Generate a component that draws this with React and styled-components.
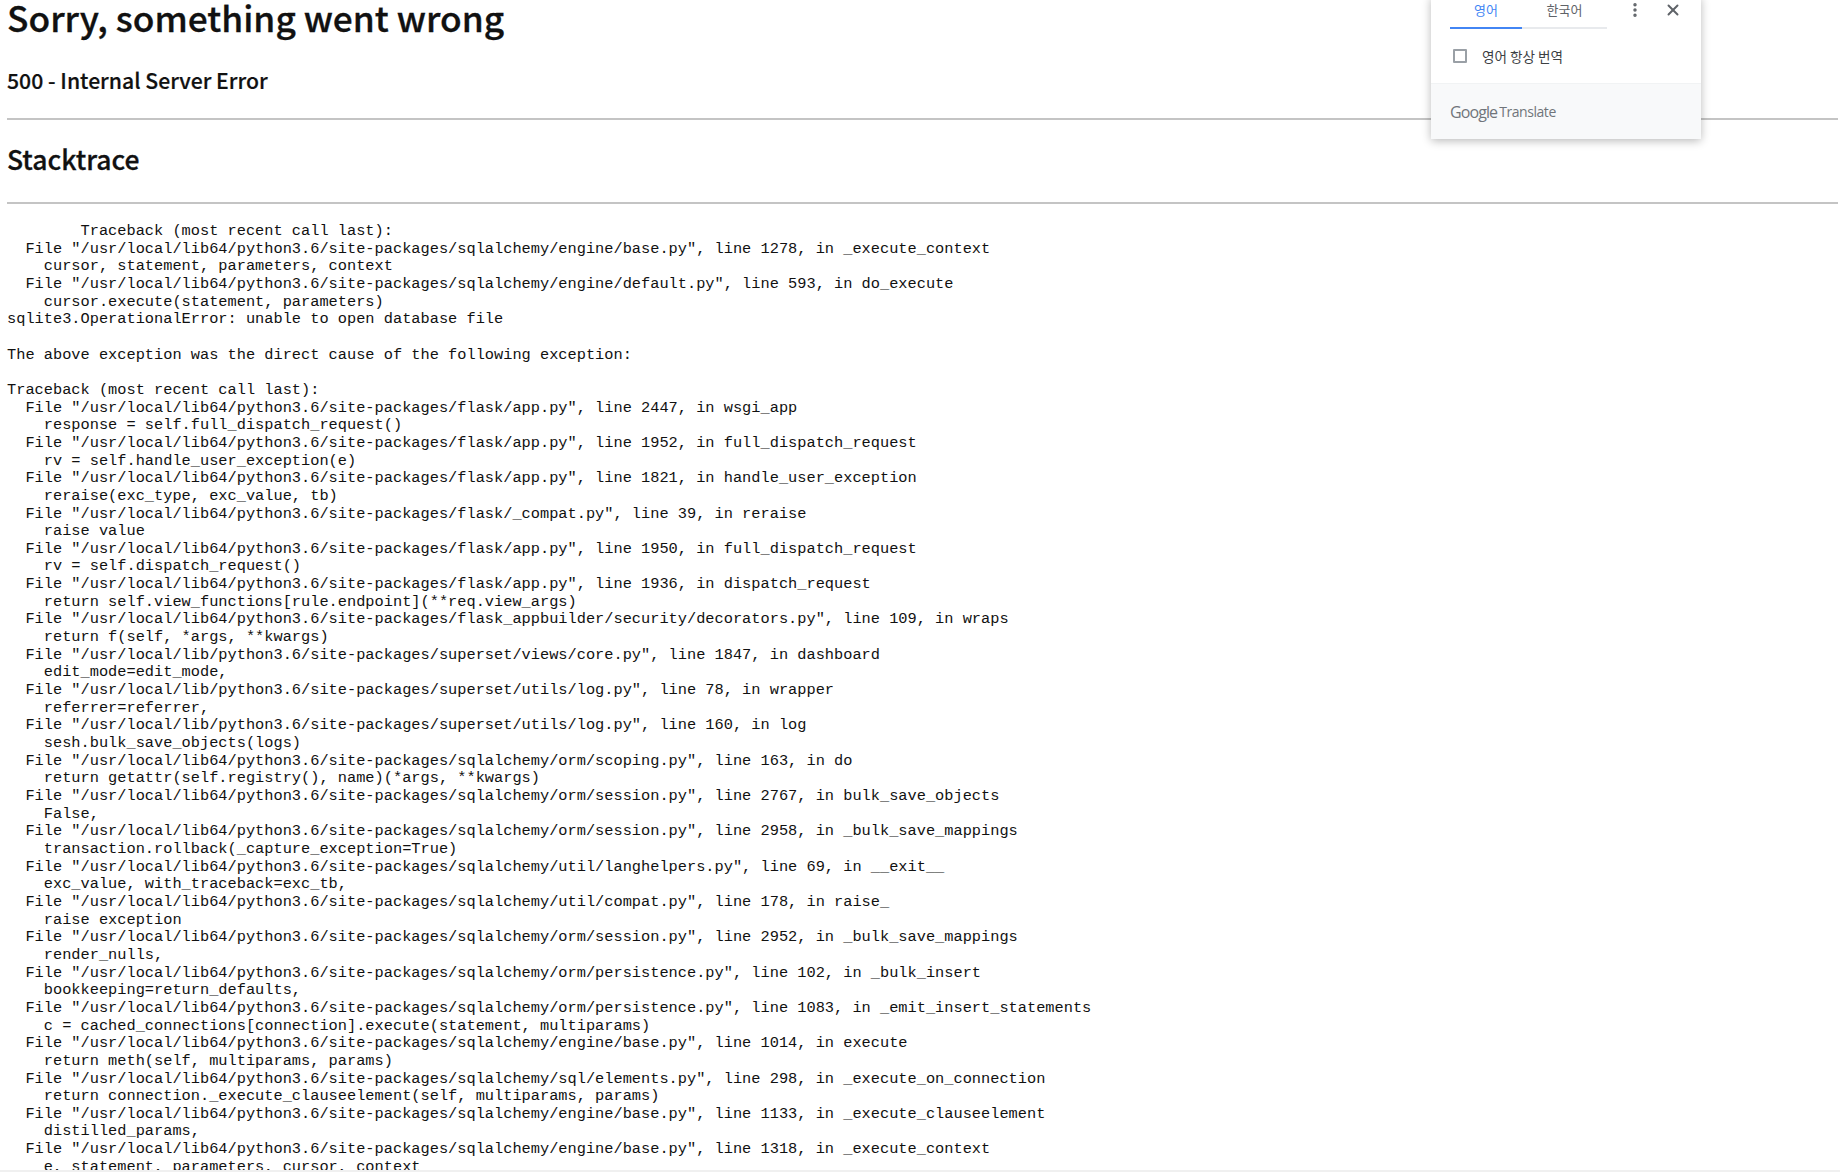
import styled, { createGlobalStyle } from "styled-components";
import { MoreVertical, X } from "lucide-react";

const trace = `        Traceback (most recent call last):
  File "/usr/local/lib64/python3.6/site-packages/sqlalchemy/engine/base.py", line 1278, in _execute_context
    cursor, statement, parameters, context
  File "/usr/local/lib64/python3.6/site-packages/sqlalchemy/engine/default.py", line 593, in do_execute
    cursor.execute(statement, parameters)
sqlite3.OperationalError: unable to open database file

The above exception was the direct cause of the following exception:

Traceback (most recent call last):
  File "/usr/local/lib64/python3.6/site-packages/flask/app.py", line 2447, in wsgi_app
    response = self.full_dispatch_request()
  File "/usr/local/lib64/python3.6/site-packages/flask/app.py", line 1952, in full_dispatch_request
    rv = self.handle_user_exception(e)
  File "/usr/local/lib64/python3.6/site-packages/flask/app.py", line 1821, in handle_user_exception
    reraise(exc_type, exc_value, tb)
  File "/usr/local/lib64/python3.6/site-packages/flask/_compat.py", line 39, in reraise
    raise value
  File "/usr/local/lib64/python3.6/site-packages/flask/app.py", line 1950, in full_dispatch_request
    rv = self.dispatch_request()
  File "/usr/local/lib64/python3.6/site-packages/flask/app.py", line 1936, in dispatch_request
    return self.view_functions[rule.endpoint](**req.view_args)
  File "/usr/local/lib64/python3.6/site-packages/flask_appbuilder/security/decorators.py", line 109, in wraps
    return f(self, *args, **kwargs)
  File "/usr/local/lib/python3.6/site-packages/superset/views/core.py", line 1847, in dashboard
    edit_mode=edit_mode,
  File "/usr/local/lib/python3.6/site-packages/superset/utils/log.py", line 78, in wrapper
    referrer=referrer,
  File "/usr/local/lib/python3.6/site-packages/superset/utils/log.py", line 160, in log
    sesh.bulk_save_objects(logs)
  File "/usr/local/lib64/python3.6/site-packages/sqlalchemy/orm/scoping.py", line 163, in do
    return getattr(self.registry(), name)(*args, **kwargs)
  File "/usr/local/lib64/python3.6/site-packages/sqlalchemy/orm/session.py", line 2767, in bulk_save_objects
    False,
  File "/usr/local/lib64/python3.6/site-packages/sqlalchemy/orm/session.py", line 2958, in _bulk_save_mappings
    transaction.rollback(_capture_exception=True)
  File "/usr/local/lib64/python3.6/site-packages/sqlalchemy/util/langhelpers.py", line 69, in __exit__
    exc_value, with_traceback=exc_tb,
  File "/usr/local/lib64/python3.6/site-packages/sqlalchemy/util/compat.py", line 178, in raise_
    raise exception
  File "/usr/local/lib64/python3.6/site-packages/sqlalchemy/orm/session.py", line 2952, in _bulk_save_mappings
    render_nulls,
  File "/usr/local/lib64/python3.6/site-packages/sqlalchemy/orm/persistence.py", line 102, in _bulk_insert
    bookkeeping=return_defaults,
  File "/usr/local/lib64/python3.6/site-packages/sqlalchemy/orm/persistence.py", line 1083, in _emit_insert_statements
    c = cached_connections[connection].execute(statement, multiparams)
  File "/usr/local/lib64/python3.6/site-packages/sqlalchemy/engine/base.py", line 1014, in execute
    return meth(self, multiparams, params)
  File "/usr/local/lib64/python3.6/site-packages/sqlalchemy/sql/elements.py", line 298, in _execute_on_connection
    return connection._execute_clauseelement(self, multiparams, params)
  File "/usr/local/lib64/python3.6/site-packages/sqlalchemy/engine/base.py", line 1133, in _execute_clauseelement
    distilled_params,
  File "/usr/local/lib64/python3.6/site-packages/sqlalchemy/engine/base.py", line 1318, in _execute_context
    e, statement, parameters, cursor, context`;

const GlobalStyle = createGlobalStyle`
  html, body {
    margin: 0;
    height: 100%;
    overflow: hidden;
    background: #fff;
  }
`;

const Page = styled.div`
  position: relative;
  height: 1172px;
  overflow: hidden;
  padding: 1px 2px 0 7px;
  box-sizing: border-box;
  font-family: "Noto Sans CJK KR", "Open Sans", sans-serif;
  color: #111;
`;

const Title = styled.h1`
  margin: 0;
  font-size: 35.3px;
  line-height: 32px;
  font-weight: 500;
  -webkit-text-stroke: 0.3px #111;
`;

const SubTitle = styled.h2`
  margin: 32px 0 0;
  font-size: 21.2px;
  line-height: 30px;
  font-weight: 500;
  -webkit-text-stroke: 0.2px #111;
`;

const Rule = styled.hr`
  margin: ${(p) => p.$top}px 0 0;
  border: 0;
  height: 2px;
  background: #c4c4c4;
`;

const SectionTitle = styled.h2`
  margin: 19px 0 0;
  font-size: 26.5px;
  line-height: 40px;
  font-weight: 500;
  -webkit-text-stroke: 0.3px #111;
`;

const Trace = styled.pre`
  margin: 19px 0 0;
  font-family: "Liberation Mono", monospace;
  font-size: 15.32px;
  line-height: 17.66px;
  color: #111;
`;

const Popup = styled.div`
  position: absolute;
  top: -4px;
  left: 1431px;
  width: 270px;
  height: 143px;
  background: #fff;
  border-radius: 2px;
  box-shadow: 0 2px 10px rgba(0, 0, 0, 0.28);
  display: flex;
  flex-direction: column;
`;

const PopupTop = styled.div`
  display: flex;
  height: 33px;
  padding-left: 19px;
  align-items: flex-end;
`;

const Tabs = styled.div`
  display: flex;
  width: 157px;
  height: 33px;
  border-bottom: 2px solid #e8eaed;
`;

const Tab = styled.div`
  width: ${(p) => p.$width}px;
  margin-bottom: -2px;
  text-align: center;
  font-size: 13px;
  line-height: 22px;
  padding-top: 5px;
  box-sizing: border-box;
  color: ${(p) => (p.$active ? "#4285f4" : "#5f6368")};
  border-bottom: 2px solid ${(p) => (p.$active ? "#4285f4" : "transparent")};
`;

const IconButton = styled.div`
  display: flex;
  align-items: center;
  justify-content: center;
  color: #5f6368;
  width: 20px;
  height: 22px;
  margin-bottom: 8px;
  margin-left: ${(p) => p.$gap}px;
`;

const CheckRow = styled.div`
  display: flex;
  align-items: center;
  height: 53px;
  padding: 0 0 0 22px;
  gap: 15px;
  font-size: 13.6px;
  color: #3c4043;
`;

const Box = styled.span`
  width: 10px;
  height: 10px;
  border: 2px solid #9aa0a6;
  border-radius: 1px;
`;

const Footer = styled.div`
  flex: 1;
  margin-top: 1px;
  background: #f8f9fa;
  border-top: 1px solid #f1f3f4;
  display: flex;
  align-items: center;
  padding: 0 0 0 19px;
  color: #70757a;
`;

const Brand = styled.span`
  font-family: "Open Sans", sans-serif;
  font-size: 16px;
  letter-spacing: -0.9px;
  margin-right: 2px;
`;

const Product = styled.span`
  font-family: "Open Sans", sans-serif;
  font-size: 14px;
  letter-spacing: -0.45px;
`;

const BottomEdge = styled.div`
  position: absolute;
  left: 0;
  right: 0;
  bottom: 0;
  height: 2px;
  background: #f0f0f0;
`;

export default function App() {
  return (
    <>
      <GlobalStyle />
      <Page>
        <Title>Sorry, something went wrong</Title>
        <SubTitle>500 - Internal Server Error</SubTitle>
        <Rule $top={23} />
        <SectionTitle>Stacktrace</SectionTitle>
        <Rule $top={23} />
        <Trace>{trace}</Trace>
        <Popup>
          <PopupTop>
            <Tabs>
              <Tab $active $width={72}>영어</Tab>
              <Tab $width={85}>한국어</Tab>
            </Tabs>
            <IconButton $gap={18}>
              <MoreVertical size={18} strokeWidth={2.6} />
            </IconButton>
            <IconButton $gap={18}>
              <X size={18} strokeWidth={2.6} />
            </IconButton>
          </PopupTop>
          <CheckRow>
            <Box />
            <span>영어 항상 번역</span>
          </CheckRow>
          <Footer>
            <Brand>Google</Brand>
            <Product>Translate</Product>
          </Footer>
        </Popup>
        <BottomEdge />
      </Page>
    </>
  );
}
